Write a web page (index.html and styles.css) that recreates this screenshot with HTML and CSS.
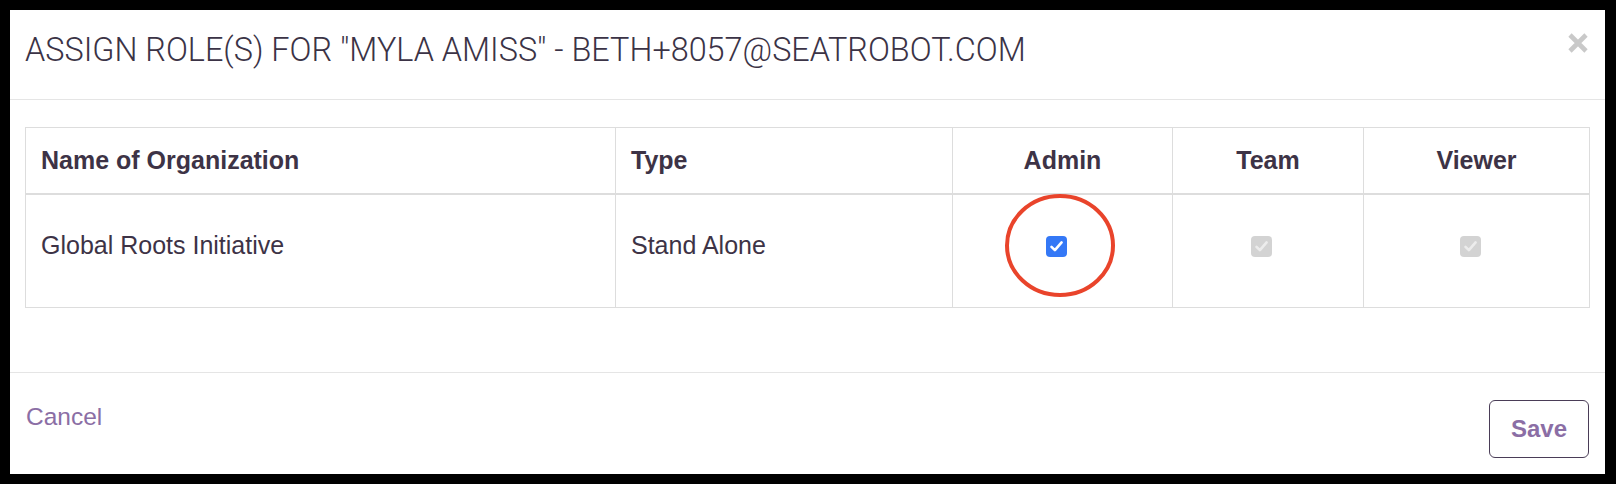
FILE: index.html
```html
<!DOCTYPE html>
<html>
<head>
<meta charset="utf-8">
<link rel="stylesheet" href="styles.css">
</head>
<body>
<div class="modal">
  <div class="modal-header">
    <h4 class="modal-title">ASSIGN ROLE(S) FOR "MYLA AMISS" - BETH+8057@SEATROBOT.COM</h4>
    <button class="close" aria-label="Close">
      <svg width="20" height="20" viewBox="0 0 20 20"><path d="M2 2 L18 18 M18 2 L2 18" stroke="#c9c9c9" stroke-width="4.6" fill="none"/></svg>
    </button>
  </div>
  <div class="modal-body">
    <table class="roles">
      <colgroup>
        <col class="c-name"><col class="c-type"><col class="c-admin"><col class="c-team"><col class="c-viewer">
      </colgroup>
      <thead>
        <tr>
          <th>Name of Organization</th>
          <th>Type</th>
          <th class="center">Admin</th>
          <th class="center">Team</th>
          <th class="center">Viewer</th>
        </tr>
      </thead>
      <tbody>
        <tr>
          <td>Global Roots Initiative</td>
          <td>Stand Alone</td>
          <td class="center check-cell">
            <span class="cb cb-on"><svg width="21" height="21" viewBox="0 0 21 21"><path d="M5.5 10.8 L8.9 14.2 L15.6 6.4" stroke="#fff" stroke-width="2.6" fill="none" stroke-linecap="round" stroke-linejoin="round"/></svg></span>
            <svg class="ring" width="110" height="103" viewBox="0 0 110 103"><ellipse cx="55" cy="51.5" rx="53" ry="49.5" stroke="#e9442b" stroke-width="4" fill="none"/></svg>
          </td>
          <td class="center check-cell">
            <span class="cb cb-off"><svg width="21" height="21" viewBox="0 0 21 21"><path d="M5.5 10.8 L8.9 14.2 L15.6 6.4" stroke="#ececec" stroke-width="2.6" fill="none" stroke-linecap="round" stroke-linejoin="round"/></svg></span>
          </td>
          <td class="center check-cell">
            <span class="cb cb-off"><svg width="21" height="21" viewBox="0 0 21 21"><path d="M5.5 10.8 L8.9 14.2 L15.6 6.4" stroke="#ececec" stroke-width="2.6" fill="none" stroke-linecap="round" stroke-linejoin="round"/></svg></span>
          </td>
        </tr>
      </tbody>
    </table>
  </div>
  <div class="modal-footer">
    <a class="cancel" href="#">Cancel</a>
    <button class="save">Save</button>
  </div>
</div>
</body>
</html>
```
FILE: styles.css
```css
html, body {
  margin: 0;
  padding: 0;
  background: #000;
}
body {
  padding: 10px 11px 10px 10px;
  font-family: "Liberation Sans", Arial, sans-serif;
  color: #3d3346;
}
.modal {
  background: #fff;
  height: 464px;
  display: flex;
  flex-direction: column;
}
.modal-header {
  display: flex;
  justify-content: space-between;
  align-items: flex-start;
  padding: 20px 17px 29px 15px;
  border-bottom: 1px solid #e5e5e5;
  height: 40px;
  flex: none;
}
.modal-title {
  margin: 0;
  font-family: Roboto, "Liberation Sans", sans-serif;
  font-weight: 300;
  font-size: 32.4px;
  line-height: 40px;
  color: #3b3346;
  white-space: nowrap;
}
.close {
  margin: 3px 0 0 0;
  padding: 0;
  border: 0;
  background: transparent;
  width: 20px;
  height: 20px;
  display: block;
}
.close svg { display: block; }
.modal-body {
  padding: 27px 16px 64px 15px;
  flex: none;
}
.roles {
  width: 1564px;
  border-collapse: collapse;
  table-layout: fixed;
  font-size: 25px;
}
.c-name { width: 590px; }
.c-type { width: 337px; }
.c-admin { width: 220px; }
.c-team { width: 191px; }
.c-viewer { width: 226px; }
.roles th, .roles td {
  border: 1px solid #ddd;
  line-height: 35px;
  text-align: left;
  padding: 0 15px;
}
.roles th {
  font-weight: bold;
  height: 65px;
  padding-top: 15px;
  padding-bottom: 15px;
  box-sizing: border-box;
  vertical-align: top;
  border-bottom: 2px solid #ddd;
}
.roles td {
  height: 113px;
  box-sizing: border-box;
  vertical-align: top;
  padding-top: 33px;
}
.roles .center { text-align: center; }
.check-cell { position: relative; }
.cb {
  display: inline-block;
  width: 21px;
  height: 21px;
  border-radius: 4px;
  margin-top: 8px;
  margin-right: 13px;
  vertical-align: top;
}
.cb svg { display: block; }
.cb-on { background: #3478f6; }
.cb-off { background: #d3d3d3; }
.ring {
  position: absolute;
  left: 52px;
  top: -1px;
}
.modal-footer {
  border-top: 1px solid #e5e5e5;
  display: flex;
  justify-content: space-between;
  align-items: flex-start;
  padding: 27px 16px 0 16px;
  flex: 1;
}
.cancel {
  font-size: 24.5px;
  line-height: 35px;
  margin-top: -1px;
  color: #8b6ea5;
  text-decoration: none;
}
.save {
  width: 100px;
  height: 58px;
  border: 1px solid #4a3d57;
  border-radius: 6px;
  background: #fff;
  color: #8b6ea5;
  font-family: "Liberation Sans", Arial, sans-serif;
  font-weight: bold;
  font-size: 24px;
  padding: 0;
}
```
